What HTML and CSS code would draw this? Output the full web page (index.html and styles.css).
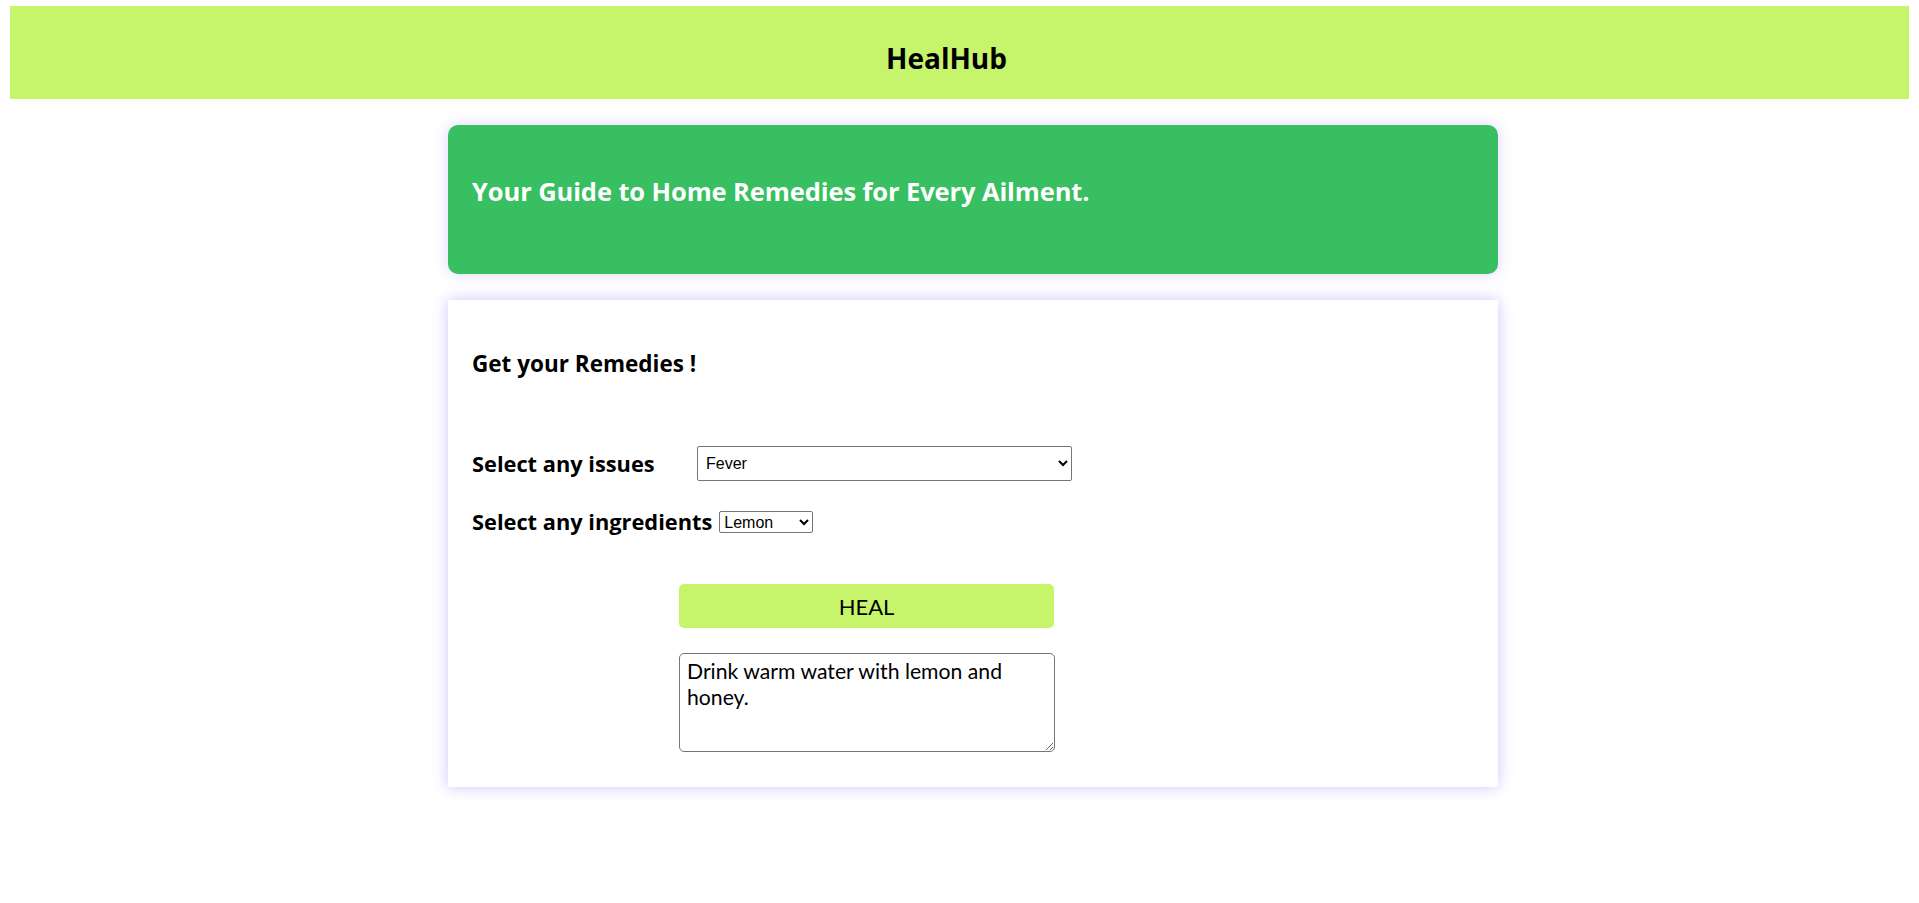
FILE: index.html
```html
<!DOCTYPE html>
<html>
<head>
<meta charset="utf-8">
<title>HealHub</title>
<link rel="stylesheet" href="styles.css">
</head>
<body>
<header class="topbar">
  <h1 class="brand">HealHub</h1>
</header>
<main class="main">
  <section class="hero">
    <h2 class="hero-title">Your Guide to Home Remedies for Every Ailment.</h2>
  </section>
  <section class="panel">
    <h3 class="panel-title">Get your Remedies !</h3>
    <div class="row row-issues">
      <label class="label label-issues" for="issues">Select any issues</label>
      <select id="issues" class="select-issues">
        <option>Fever</option>
        <option>Cold</option>
        <option>Headache</option>
      </select>
    </div>
    <div class="row row-ingredients">
      <label class="label" for="ingredients">Select any ingredients</label>
      <select id="ingredients" class="select-ingredients">
        <option>Lemon</option>
        <option>Honey</option>
        <option>Ginger</option>
      </select>
    </div>
    <div class="actions">
      <button class="heal-btn" type="button">HEAL</button>
      <textarea class="result">Drink warm water with lemon and honey.</textarea>
    </div>
  </section>
</main>
</body>
</html>
```
FILE: styles.css
```css
* { box-sizing: border-box; }
html, body { background: #ffffff; }
body {
  margin: 6px 10px 0 10px;
  padding-bottom: 60px;
  font-family: "Lato", "Open Sans", sans-serif;
  color: #000;
}
.topbar {
  background: #c6f46a;
  height: 93px;
  display: flex;
  align-items: center;
  justify-content: center;
  padding-top: 10px;
}
.brand {
  margin: 0 26px 0 0;
  font-family: "Open Sans", "Lato", sans-serif;
  font-size: 28px;
  font-weight: 700;
  line-height: 1;
}
.main {
  margin-left: 438px;
  width: 1050px;
  padding-top: 26px;
}
.hero {
  background: #37bf62;
  border-radius: 10px;
  height: 149px;
  padding: 0 24px;
  display: flex;
  align-items: center;
  padding-bottom: 16px;
  box-shadow: 0 0 14px rgba(110, 90, 255, 0.25);
}
.hero-title {
  margin: 0;
  color: #ffffff;
  font-family: "Open Sans", "Lato", sans-serif;
  font-size: 25.5px;
  font-weight: 700;
  line-height: 1;
  letter-spacing: -0.1px;
}
.panel {
  margin-top: 26px;
  height: 487px;
  background: #ffffff;
  padding: 52px 24px 0 24px;
  box-shadow: 0 0 14px rgba(110, 90, 255, 0.35);
}
.panel-title {
  margin: 0;
  font-family: "Open Sans", "Lato", sans-serif;
  font-size: 22.5px;
  font-weight: 700;
  line-height: 24px;
}
.row {
  display: flex;
  align-items: center;
}
.row-issues { margin-top: 70px; }
.row-ingredients { margin-top: 29px; }
.label {
  font-family: "Open Sans", "Lato", sans-serif;
  font-size: 21.8px;
  font-weight: 700;
  line-height: 24px;
}
.label-issues { width: 225px; flex: none; }
.row-ingredients .label { margin-right: 7px; }
.select-issues {
  width: 375px;
  height: 35px;
  font-family: Arial, "Liberation Sans", sans-serif;
  font-size: 16px;
  padding: 0 4px;
  border: 1px solid #767676;
  border-radius: 2px;
  background: #fff;
  color: #000;
}
.select-ingredients {
  width: 94px;
  height: 22px;
  font-family: Arial, "Liberation Sans", sans-serif;
  font-size: 16px;
  padding: 0;
  border: 1px solid #767676;
  border-radius: 2px;
  background: #fff;
  color: #000;
}
.actions {
  margin-left: 207px;
  width: 376px;
  margin-top: 50px;
  display: flex;
  flex-direction: column;
  gap: 25px;
}
.heal-btn {
  width: 375px;
  height: 44px;
  background: #c6f46a;
  border: none;
  border-radius: 5px;
  font-family: "Lato", "Open Sans", sans-serif;
  font-size: 22px;
  color: #000;
  cursor: pointer;
}
.result {
  width: 376px;
  height: 99px;
  font-family: "Lato", "Open Sans", sans-serif;
  font-size: 21.2px;
  line-height: 26px;
  padding: 4px 7px;
  border: 1px solid #767676;
  border-radius: 5px;
  resize: both;
  color: #000;
}
```
